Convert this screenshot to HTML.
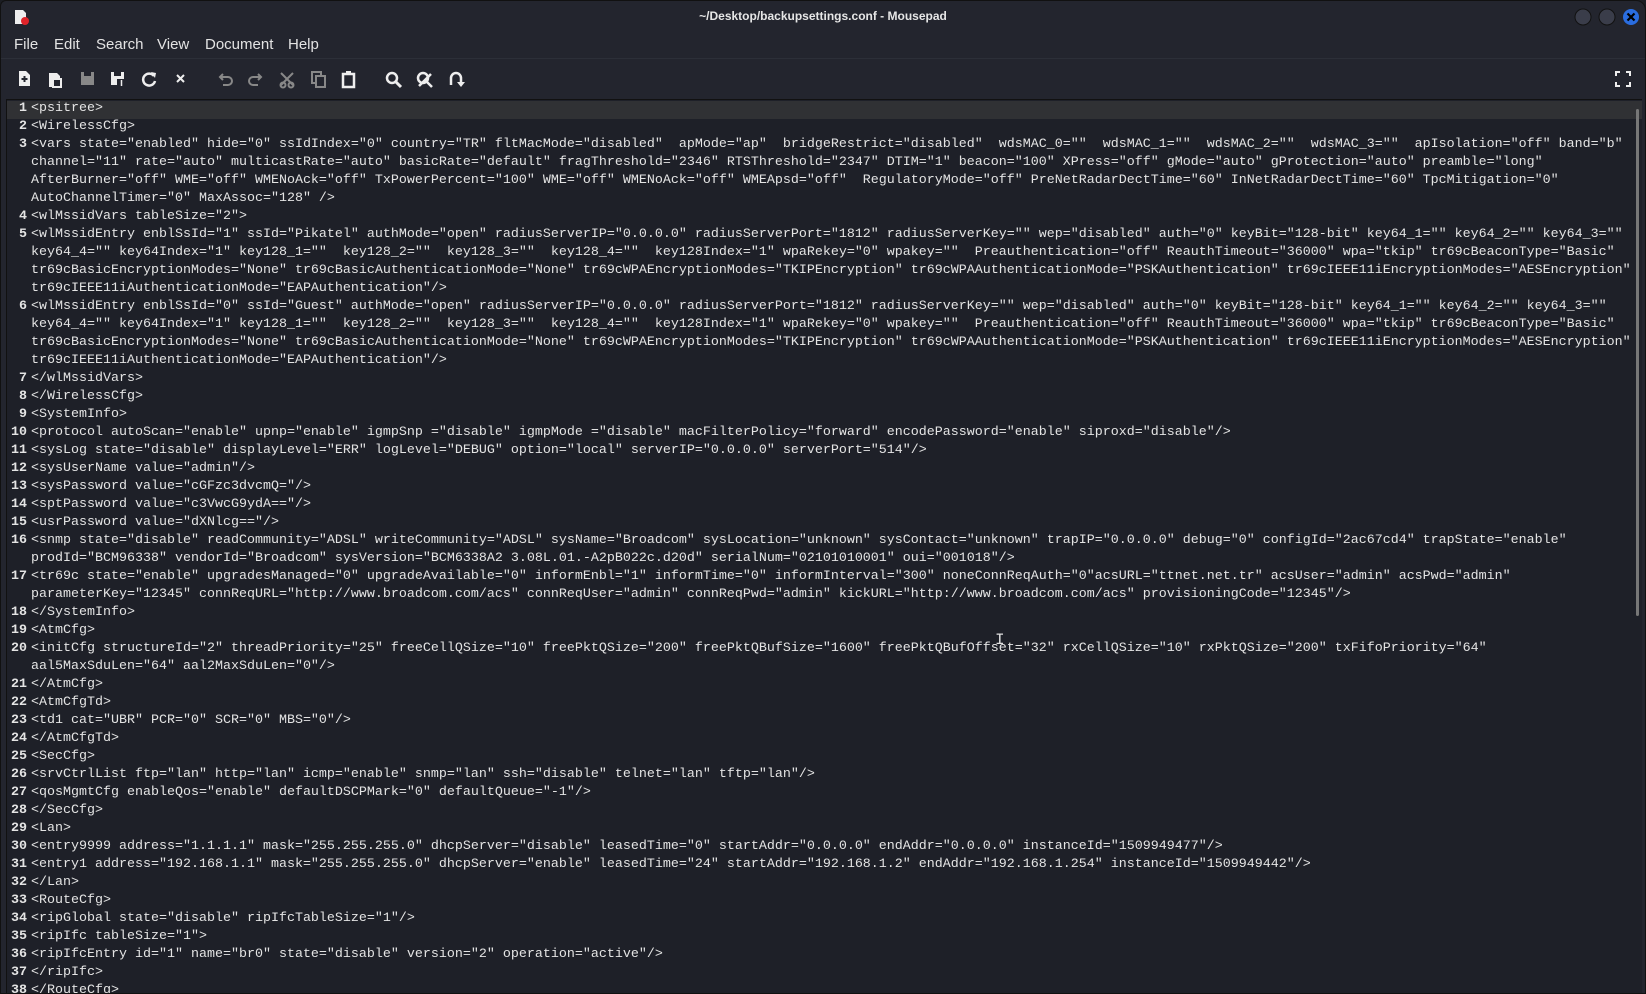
<!DOCTYPE html>
<html><head><meta charset="utf-8"><style>
body{margin:0;width:1646px;height:994px;background:#1b1d23;overflow:hidden;font-family:"Liberation Sans",sans-serif;}
#win{position:absolute;left:0;top:0;width:1644px;height:992px;background:#23252e;border:1px solid #111;border-radius:6px 10px 0 0;overflow:hidden}
#title{position:absolute;top:8px;left:0;width:100%;text-align:center;color:#e6e6e6;font-size:12px;font-weight:bold}
.menu{position:absolute;top:35px;font-size:15px;color:#e3e3e3}
.tb{position:absolute;top:68px}
#ed{position:absolute;left:5px;top:98px;width:1635px;height:893px;background:#1e2028;border-top:1px solid #111;border-left:1px solid #111;overflow:hidden}
.r{position:absolute;left:0;height:18px;line-height:18px;font-family:"Liberation Mono",monospace;font-size:13.33px;color:#e4e4e4;white-space:pre}
.n{display:inline-block;width:20px;text-align:right;font-weight:bold;margin-right:4px}
.c{position:absolute;left:0;width:1635px}
</style></head><body><div id="win">
<svg style="position:absolute;left:12px;top:8px" width="16" height="16"><path d="M2 1h8l3 3v11H2z" fill="#eee"/><circle cx="12" cy="12" r="4" fill="#e0242a"/></svg>
<div id="title">~/Desktop/backupsettings.conf - Mousepad</div>
<svg style="position:absolute;left:1572px;top:7px" width="70" height="20"><circle cx="10" cy="9" r="8" fill="#3a3d4a" stroke="#111"/><circle cx="34" cy="9" r="8" fill="#3a3d4a" stroke="#111"/><circle cx="58" cy="9" r="8" fill="#2a6de0"/><path d="M54.5 5.5l7 7M61.5 5.5l-7 7" stroke="#000" stroke-width="2.2"/></svg>
<span class="menu" style="left:13px">File</span><span class="menu" style="left:53px">Edit</span><span class="menu" style="left:95px">Search</span><span class="menu" style="left:156px">View</span><span class="menu" style="left:204px">Document</span><span class="menu" style="left:287px">Help</span>
<div style="position:absolute;top:57px;left:0;width:100%;border-top:1px solid #2c2f38"></div>
<svg class="tb" style="left:0" width="480" height="20" fill="none" stroke-width="2">
<g fill="#eee"><path d="M18 2h7l4 4v11H18z"/></g><path d="M20.5 10h6M23.5 7v6" stroke="#23252e"/>
<g fill="#eee"><path d="M48 4h8l3 3v11H48z"/></g><rect x="52" y="10" width="8" height="8" fill="#23252e" stroke="#eee"/>
<rect x="80" y="3" width="13" height="13" fill="#888"/><rect x="83" y="3" width="7" height="4" fill="#23252e"/>
<rect x="110" y="3" width="13" height="13" fill="#eee"/><rect x="113" y="3" width="7" height="4" fill="#23252e"/><rect x="116" y="10" width="9" height="8" fill="#23252e"/><path d="M120.5 11v6" stroke="#eee" stroke-width="1.5"/>
<path d="M153 7a6 6 0 1 0 1 5" stroke="#eee" stroke-width="2.5"/><path d="M150 3l5 1-1 5z" fill="#eee"/>
<path d="M176 6l7 7M183 6l-7 7" stroke="#eee"/>
<path d="M220 8h7a4 4 0 0 1 0 8h-5M222 5l-3 3 3 3" stroke="#888"/>
<path d="M259 8h-7a4 4 0 0 0 0 8h5M257 5l3 3-3 3" stroke="#888"/>
<path d="M280 4l12 12M292 4l-12 12" stroke="#888"/><circle cx="282" cy="16" r="2.5" stroke="#888"/><circle cx="290" cy="16" r="2.5" stroke="#888"/>
<rect x="311" y="3" width="9" height="11" stroke="#888"/><rect x="315" y="7" width="9" height="11" fill="#23252e" stroke="#888"/>
<rect x="342" y="5" width="11" height="13" stroke="#eee" stroke-width="2.5"/><rect x="345" y="2" width="5" height="4" fill="#eee"/>
<circle cx="391" cy="9" r="5" stroke="#eee" stroke-width="2.5"/><path d="M395 13l5 5" stroke="#eee" stroke-width="3"/>
<circle cx="422" cy="9" r="5" stroke="#eee" stroke-width="2.5"/><path d="M418 17l12-12M426 13l5 5" stroke="#eee" stroke-width="2.5"/>
<path d="M450 16V9a5 5 0 0 1 10 0v5" stroke="#eee" stroke-width="2.5"/><path d="M456 13h8l-4 5z" fill="#eee"/>
</svg>
<svg style="position:absolute;left:1614px;top:70px" width="16" height="16" fill="none" stroke="#eee" stroke-width="2"><path d="M1 5V1h4M11 1h4v4M15 11v4h-4M5 15H1v-4"/></svg>
<div id="ed">
<div class="c" style="top:1px;height:18px;background:#303134"></div>
<div style="position:absolute;left:1629px;top:9px;width:3px;height:507px;background:#777;border-radius:2px"></div>
<div id="lines"></div>
</div>
<div style="position:absolute;left:994px;top:630px;color:#ddd;font-size:16px;font-family:'Liberation Mono',monospace">I</div>
</div>
<script>
var L=[
[1,'<psitree>'],[2,'<WirelessCfg>'],
[3,'<vars state="enabled" hide="0" ssIdIndex="0" country="TR" fltMacMode="disabled"  apMode="ap"  bridgeRestrict="disabled"  wdsMAC_0=""  wdsMAC_1=""  wdsMAC_2=""  wdsMAC_3=""  apIsolation="off" band="b"'],
[0,'channel="11" rate="auto" multicastRate="auto" basicRate="default" fragThreshold="2346" RTSThreshold="2347" DTIM="1" beacon="100" XPress="off" gMode="auto" gProtection="auto" preamble="long"'],
[0,'AfterBurner="off" WME="off" WMENoAck="off" TxPowerPercent="100" WME="off" WMENoAck="off" WMEApsd="off"  RegulatoryMode="off" PreNetRadarDectTime="60" InNetRadarDectTime="60" TpcMitigation="0"'],
[0,'AutoChannelTimer="0" MaxAssoc="128" />'],
[4,'<wlMssidVars tableSize="2">'],
[5,'<wlMssidEntry enblSsId="1" ssId="Pikatel" authMode="open" radiusServerIP="0.0.0.0" radiusServerPort="1812" radiusServerKey="" wep="disabled" auth="0" keyBit="128-bit" key64_1="" key64_2="" key64_3=""'],
[0,'key64_4="" key64Index="1" key128_1=""  key128_2=""  key128_3=""  key128_4=""  key128Index="1" wpaRekey="0" wpakey=""  Preauthentication="off" ReauthTimeout="36000" wpa="tkip" tr69cBeaconType="Basic"'],
[0,'tr69cBasicEncryptionModes="None" tr69cBasicAuthenticationMode="None" tr69cWPAEncryptionModes="TKIPEncryption" tr69cWPAAuthenticationMode="PSKAuthentication" tr69cIEEE11iEncryptionModes="AESEncryption"'],
[0,'tr69cIEEE11iAuthenticationMode="EAPAuthentication"/>'],
[6,'<wlMssidEntry enblSsId="0" ssId="Guest" authMode="open" radiusServerIP="0.0.0.0" radiusServerPort="1812" radiusServerKey="" wep="disabled" auth="0" keyBit="128-bit" key64_1="" key64_2="" key64_3=""'],
[0,'key64_4="" key64Index="1" key128_1=""  key128_2=""  key128_3=""  key128_4=""  key128Index="1" wpaRekey="0" wpakey=""  Preauthentication="off" ReauthTimeout="36000" wpa="tkip" tr69cBeaconType="Basic"'],
[0,'tr69cBasicEncryptionModes="None" tr69cBasicAuthenticationMode="None" tr69cWPAEncryptionModes="TKIPEncryption" tr69cWPAAuthenticationMode="PSKAuthentication" tr69cIEEE11iEncryptionModes="AESEncryption"'],
[0,'tr69cIEEE11iAuthenticationMode="EAPAuthentication"/>'],
[7,'</wlMssidVars>'],[8,'</WirelessCfg>'],[9,'<SystemInfo>'],
[10,'<protocol autoScan="enable" upnp="enable" igmpSnp ="disable" igmpMode ="disable" macFilterPolicy="forward" encodePassword="enable" siproxd="disable"/>'],
[11,'<sysLog state="disable" displayLevel="ERR" logLevel="DEBUG" option="local" serverIP="0.0.0.0" serverPort="514"/>'],
[12,'<sysUserName value="admin"/>'],[13,'<sysPassword value="cGFzc3dvcmQ="/>'],[14,'<sptPassword value="c3VwcG9ydA=="/>'],[15,'<usrPassword value="dXNlcg=="/>'],
[16,'<snmp state="disable" readCommunity="ADSL" writeCommunity="ADSL" sysName="Broadcom" sysLocation="unknown" sysContact="unknown" trapIP="0.0.0.0" debug="0" configId="2ac67cd4" trapState="enable"'],
[0,'prodId="BCM96338" vendorId="Broadcom" sysVersion="BCM6338A2 3.08L.01.-A2pB022c.d20d" serialNum="02101010001" oui="001018"/>'],
[17,'<tr69c state="enable" upgradesManaged="0" upgradeAvailable="0" informEnbl="1" informTime="0" informInterval="300" noneConnReqAuth="0"acsURL="ttnet.net.tr" acsUser="admin" acsPwd="admin"'],
[0,'parameterKey="12345" connReqURL="http://www.broadcom.com/acs" connReqUser="admin" connReqPwd="admin" kickURL="http://www.broadcom.com/acs" provisioningCode="12345"/>'],
[18,'</SystemInfo>'],[19,'<AtmCfg>'],
[20,'<initCfg structureId="2" threadPriority="25" freeCellQSize="10" freePktQSize="200" freePktQBufSize="1600" freePktQBufOffset="32" rxCellQSize="10" rxPktQSize="200" txFifoPriority="64"'],
[0,'aal5MaxSduLen="64" aal2MaxSduLen="0"/>'],
[21,'</AtmCfg>'],[22,'<AtmCfgTd>'],[23,'<td1 cat="UBR" PCR="0" SCR="0" MBS="0"/>'],[24,'</AtmCfgTd>'],[25,'<SecCfg>'],
[26,'<srvCtrlList ftp="lan" http="lan" icmp="enable" snmp="lan" ssh="disable" telnet="lan" tftp="lan"/>'],
[27,'<qosMgmtCfg enableQos="enable" defaultDSCPMark="0" defaultQueue="-1"/>'],
[28,'</SecCfg>'],[29,'<Lan>'],
[30,'<entry9999 address="1.1.1.1" mask="255.255.255.0" dhcpServer="disable" leasedTime="0" startAddr="0.0.0.0" endAddr="0.0.0.0" instanceId="1509949477"/>'],
[31,'<entry1 address="192.168.1.1" mask="255.255.255.0" dhcpServer="enable" leasedTime="24" startAddr="192.168.1.2" endAddr="192.168.1.254" instanceId="1509949442"/>'],
[32,'</Lan>'],[33,'<RouteCfg>'],[34,'<ripGlobal state="disable" ripIfcTableSize="1"/>'],[35,'<ripIfc tableSize="1">'],
[36,'<ripIfcEntry id="1" name="br0" state="disable" version="2" operation="active"/>'],[37,'</ripIfc>'],[38,'</RouteCfg>']];
var h='';function e(s){return s.replace(/&/g,'&amp;').replace(/</g,'&lt;')}
L.forEach(function(l,i){h+='<div class="r" style="top:'+(i*18)+'px"><span class="n">'+(l[0]||'')+'</span>'+e(l[1])+'</div>';});
document.getElementById('lines').innerHTML=h;
</script>
</body></html>
